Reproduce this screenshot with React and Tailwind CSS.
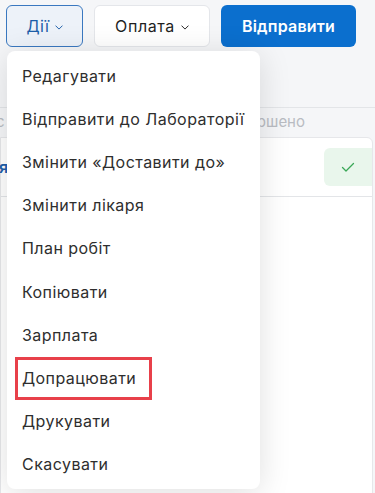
import React from "react";

const items = [
  "Редагувати",
  "Відправити до Лабораторії",
  "Змінити «Доставити до»",
  "Змінити лікаря",
  "План робіт",
  "Копіювати",
  "Зарплата",
  "Допрацювати",
  "Друкувати",
  "Скасувати",
];

function Chevron({ className }) {
  return (
    <svg viewBox="0 0 10 6" className={className} fill="none" stroke="currentColor" strokeWidth="1.2">
      <path d="M1 1l4 4 4-4" strokeLinecap="round" strokeLinejoin="round" />
    </svg>
  );
}

export default function App() {
  return (
    <div
      className="relative h-[493px] w-[375px] overflow-hidden bg-[#f5f6f8] text-[#2b2b2b]"
      style={{ fontFamily: "Inter, 'Noto Sans', sans-serif" }}
    >
      {/* top toolbar */}
      <div className="flex items-center gap-[11px] pl-[6px] pt-[5px]">
        <button className="flex h-[42px] w-[77px] items-center justify-center gap-[5px] rounded-[6px] border border-[#3a78c0] bg-[#edf2f9] text-[16px] tracking-[0.5px] text-[#1d5ea9]">
          Дії
          <Chevron className="mt-[3px] h-[5px] w-[8px]" />
        </button>
        <button className="flex h-[42px] w-[116px] items-center justify-center gap-[6px] rounded-[6px] border border-[#e4e6ea] bg-white text-[16px] tracking-[0.6px] text-[#1f1f1f]">
          Оплата
          <Chevron className="mt-[3px] h-[5px] w-[8px]" />
        </button>
        <button className="flex h-[42px] w-[135px] items-center justify-center rounded-[6px] bg-[#0b6fce] text-[16px] font-semibold tracking-[0.2px] text-white">
          Відправити
        </button>
      </div>

      {/* background content */}
      <div className="mt-[60px] border-t border-[#e3e5e8]">
        <div className="flex h-[29px] items-center justify-between text-[15px] text-[#b9bcc2]">
          <span className="-ml-[4px]">с</span>
          <span className="mr-[70px]">Завершено</span>
        </div>
        <div className="mr-[2px] h-[360px] rounded-tr-[6px] border border-[#e6e7ea] bg-white">
          <div className="flex h-[59px] items-center justify-between border-b border-[#e3e5e8]">
            <span className="-ml-[2px] text-[16px] font-semibold text-[#1d5ea9]">я</span>
            <div className="flex h-[38px] w-[48px] items-center justify-center rounded-l-[6px] bg-[#e9f6ec]">
              <svg viewBox="0 0 16 16" className="h-[16px] w-[16px]" fill="none" stroke="#3aa757" strokeWidth="1.3">
                <path d="M2.5 8.5l3.5 3.5 7.5-7.5" strokeLinecap="round" strokeLinejoin="round" />
              </svg>
            </div>
          </div>
        </div>
      </div>

      {/* dropdown menu */}
      <div className="absolute left-[7px] top-[51px] w-[253px] rounded-[8px] bg-white py-[3px] shadow-[0_4px_32px_rgba(0,0,0,0.13)]">
        {items.map((t) => (
          <div key={t} className="relative flex h-[43.2px] items-center whitespace-nowrap pl-[15px] text-[16px] tracking-[0.45px] text-[#2e2e2e]">
            {t}
            {t === "Допрацювати" && (
              <div className="pointer-events-none absolute left-[8px] top-[1px] h-[43px] w-[137px] border-[3px] border-[#e8404a]" />
            )}
          </div>
        ))}
      </div>
    </div>
  );
}
